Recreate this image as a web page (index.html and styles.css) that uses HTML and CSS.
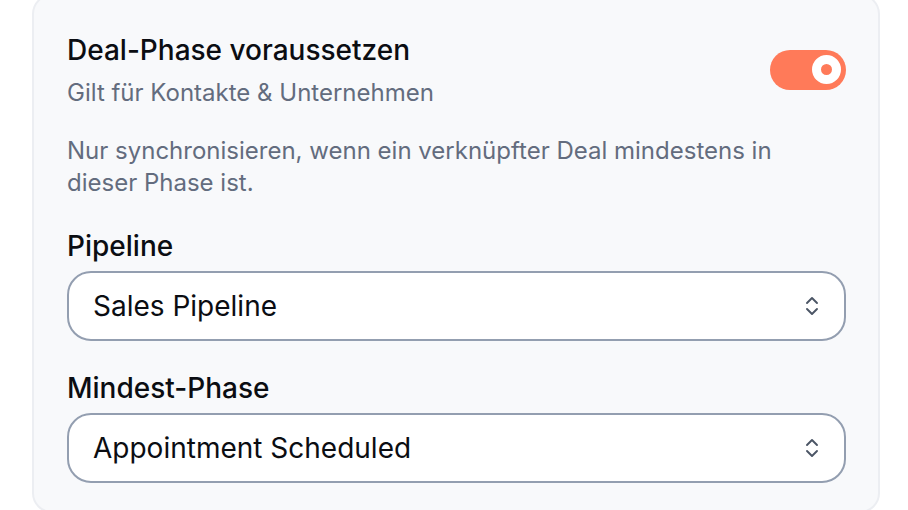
FILE: index.html
```html
<!DOCTYPE html>
<html lang="de">
<head>
<meta charset="utf-8">
<link rel="stylesheet" href="styles.css">
</head>
<body>
<div class="page">
  <section class="card">
    <div class="header">
      <div class="header-text">
        <div class="title">Deal-Phase voraussetzen</div>
        <div class="subtitle">Gilt für Kontakte &amp; Unternehmen</div>
      </div>
      <div class="toggle"><span class="knob"></span></div>
    </div>
    <p class="desc">Nur synchronisieren, wenn ein verknüpfter Deal mindestens in dieser Phase ist.</p>
    <div class="field">
      <label class="label">Pipeline</label>
      <div class="select">
        <span class="value">Sales Pipeline</span>
        <svg class="chev" width="16" height="24" viewBox="0 0 16 24"><path d="M3 9 L8 4 L13 9 M3 15 L8 20 L13 15" fill="none" stroke="#4b5565" stroke-width="1.9" stroke-linecap="round" stroke-linejoin="round"/></svg>
      </div>
    </div>
    <div class="field">
      <label class="label">Mindest-Phase</label>
      <div class="select">
        <span class="value">Appointment Scheduled</span>
        <svg class="chev" width="16" height="24" viewBox="0 0 16 24"><path d="M3 9 L8 4 L13 9 M3 15 L8 20 L13 15" fill="none" stroke="#4b5565" stroke-width="1.9" stroke-linecap="round" stroke-linejoin="round"/></svg>
      </div>
    </div>
  </section>
</div>
</body>
</html>
```
FILE: styles.css
```css
html, body {
  margin: 0;
  padding: 0;
  background: #ffffff;
  overflow: hidden;
}
body {
  font-family: Inter, "Noto Sans", sans-serif;
  width: 908px;
  height: 510px;
}
.page {
  padding: 0 28px 0 32px;
}
.card {
  margin-top: -6px;
  background: #f8f9fb;
  border: 2px solid #eceef2;
  border-radius: 20px;
  padding: 34px 32px 28px 33px;
  display: flex;
  flex-direction: column;
}
.header {
  display: flex;
  align-items: center;
  justify-content: space-between;
}
.header-text {
  display: flex;
  flex-direction: column;
  gap: 7px;
}
.title {
  font-size: 28px;
  font-weight: 500;
  line-height: 40px;
  color: #0b0d12;
}
.subtitle {
  font-size: 24px;
  line-height: 32px;
  color: #636c7e;
}
.toggle {
  width: 76px;
  height: 40px;
  border-radius: 20px;
  background: #ff7a59;
  display: flex;
  align-items: center;
  justify-content: flex-end;
  padding-right: 5px;
  box-sizing: border-box;
}
.knob {
  width: 29px;
  height: 29px;
  border-radius: 50%;
  background: #ff7a59;
  box-sizing: border-box;
  border: 9.5px solid #ffffff;
}
.desc {
  margin: 26px 0 0 0;
  font-size: 24px;
  line-height: 32px;
  color: #636c7e;
  max-width: 740px;
}
.field {
  display: flex;
  flex-direction: column;
  margin-top: 27px;
}
.label {
  font-size: 28px;
  font-weight: 500;
  line-height: 40px;
  color: #0b0d12;
  margin-bottom: 5px;
}
.select {
  height: 70px;
  box-sizing: border-box;
  border: 2px solid #939eb0;
  border-radius: 24px;
  background: #ffffff;
  display: flex;
  align-items: center;
  justify-content: space-between;
  padding: 0 24px 0 24px;
}
.value {
  font-size: 28px;
  line-height: 40px;
  color: #0b0d12;
}
.chev {
  display: block;
}
```
